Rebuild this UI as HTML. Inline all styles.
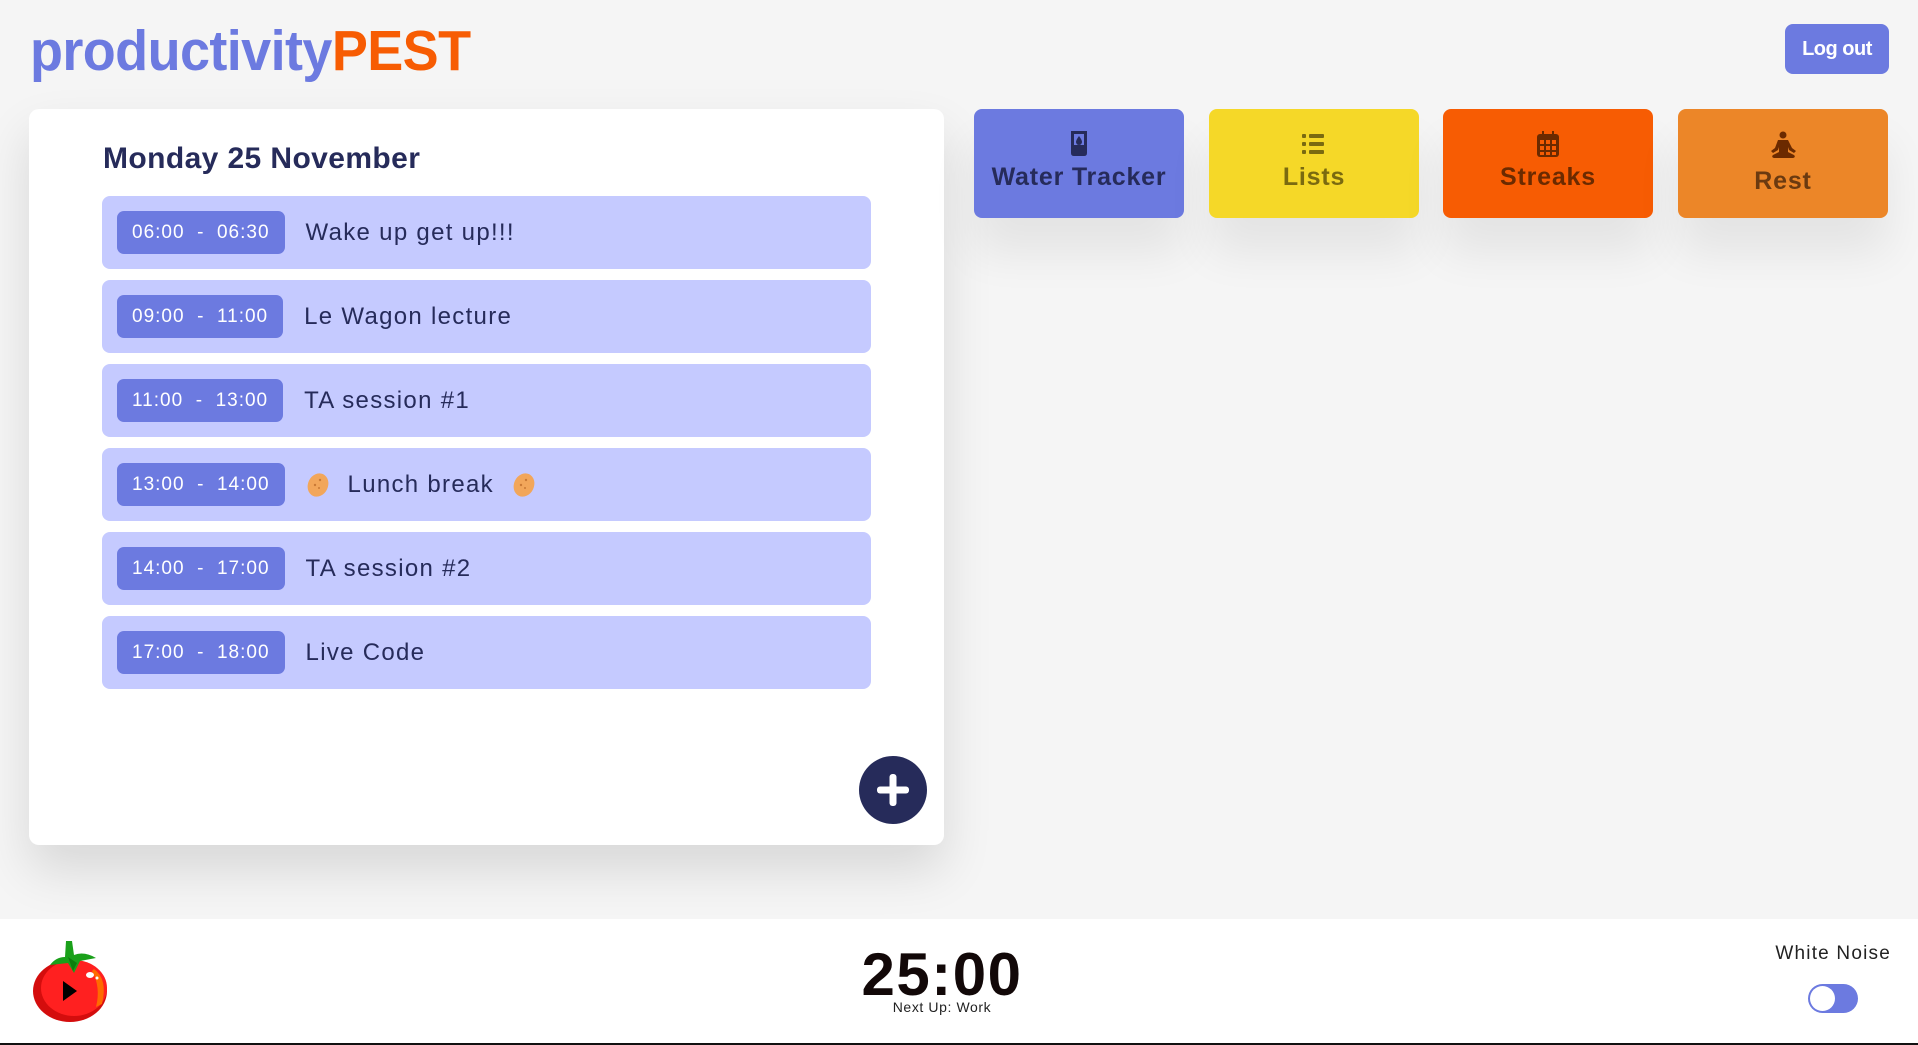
<!DOCTYPE html>
<html><head><meta charset="utf-8"><style>
*{margin:0;padding:0;box-sizing:border-box}
html,body{width:1918px;height:1045px;overflow:hidden}
body{background:#f5f5f5;font-family:"Liberation Sans",sans-serif;position:relative}
.logo{position:absolute;left:30px;top:20px;font-size:54px;font-weight:bold;letter-spacing:-0.6px;color:#6c7ae0;transform:scaleY(1.05)}
.logo span{color:#f75c03}
.logout{position:absolute;left:1785px;top:24px;width:104px;height:50px;background:#6c7ae0;border-radius:8px;color:#fff;font-weight:bold;font-size:20px;line-height:50px;text-align:center;letter-spacing:-.5px}
.card{position:absolute;left:29px;top:109px;width:915px;height:736px;background:#fff;border-radius:10px;box-shadow:0 25px 50px rgba(0,0,0,.12)}
.title{position:absolute;left:74px;top:33px;font-size:30px;font-weight:bold;color:#262b5a;letter-spacing:0.4px}
.row{position:absolute;left:73px;width:769px;height:73px;background:#c5caff;border-radius:8px;display:flex;align-items:center}
.badge{margin-left:15px;height:43px;background:#6c7ae0;border-radius:7px;color:#fff;font-size:19px;line-height:43px;padding:0 15px;white-space:pre;letter-spacing:1px}
.ev{margin-left:21px;font-size:24px;color:#262b5a;letter-spacing:1.3px;display:flex;align-items:center;gap:18px}
.plus{position:absolute;left:830px;top:647px;width:68px;height:68px;border-radius:50%;background:#262b5a}
.plus:before,.plus:after{content:"";position:absolute;background:#fff;border-radius:3px;left:50%;top:50%;transform:translate(-50%,-50%)}
.plus:before{width:32px;height:7px}.plus:after{width:7px;height:32px}
.tile{position:absolute;top:109px;width:210px;height:109px;border-radius:8px;box-shadow:0 35px 45px rgba(0,0,0,.07);text-align:center;font-weight:bold;font-size:25px;letter-spacing:0.8px}
.tile svg{display:block;margin:22px auto 6px}
.footer{position:absolute;left:0;top:919px;width:1918px;height:126px;background:#fff;border-bottom:2px solid #111}
.time{position:absolute;left:0;width:1884px;text-align:center;top:21px;font-size:60px;font-weight:bold;color:#120808;letter-spacing:1.5px}
.next{position:absolute;left:0;width:1884px;text-align:center;top:80px;font-size:14px;color:#222;letter-spacing:.6px}
.wn{position:absolute;right:27px;top:24px;font-size:19px;color:#222;letter-spacing:1.2px}
.tog{position:absolute;left:1808px;top:65px;width:50px;height:29px;border-radius:15px;background:#6c7ae0}
.tog:after{content:"";position:absolute;left:2px;top:2px;width:25px;height:25px;border-radius:50%;background:#fff}
</style></head><body>
<div class="logo">productivity<span>PEST</span></div>
<div class="logout">Log out</div>
<div class="card">
<div class="title">Monday 25 November</div>
<div class="row" style="top:87px"><div class="badge">06:00  -  06:30</div><div class="ev">Wake up get up!!!</div></div>
<div class="row" style="top:171px"><div class="badge">09:00  -  11:00</div><div class="ev">Le Wagon lecture</div></div>
<div class="row" style="top:255px"><div class="badge">11:00  -  13:00</div><div class="ev">TA session #1</div></div>
<div class="row" style="top:339px"><div class="badge">13:00  -  14:00</div><div class="ev">
<svg width="24" height="26" viewBox="0 0 24 26"><ellipse cx="12" cy="13" rx="10" ry="12" transform="rotate(25 12 13)" fill="#f2a65a"/><circle cx="14" cy="8" r="1.2" fill="#c97a36"/><circle cx="9" cy="13" r="1.2" fill="#c97a36"/><circle cx="13" cy="16" r="1" fill="#c97a36"/></svg>
Lunch break
<svg width="24" height="26" viewBox="0 0 24 26"><ellipse cx="12" cy="13" rx="10" ry="12" transform="rotate(25 12 13)" fill="#f2a65a"/><circle cx="14" cy="8" r="1.2" fill="#c97a36"/><circle cx="9" cy="13" r="1.2" fill="#c97a36"/><circle cx="13" cy="16" r="1" fill="#c97a36"/></svg></div></div>
<div class="row" style="top:423px"><div class="badge">14:00  -  17:00</div><div class="ev">TA session #2</div></div>
<div class="row" style="top:507px"><div class="badge">17:00  -  18:00</div><div class="ev">Live Code</div></div>
<div class="plus"></div>
</div>

<div class="tile" style="left:974px;background:#6c7ae0;color:#262b5a">
<svg width="18" height="26" viewBox="0 0 18 26"><path d="M1 0h16v22q0 3-3 3H4q-3 0-3-3z" fill="#262b5a"/><rect x="4" y="3" width="10" height="11" fill="#6c7ae0"/><path d="M9 5q-3 4-3 6a3 3 0 0 0 6 0q0-2-3-6z" fill="#262b5a"/></svg>Water Tracker</div>
<div class="tile" style="left:1209px;background:#f5d828;color:#7a6a10">
<svg width="24" height="26" viewBox="0 0 24 26"><g fill="#7a6a10"><rect x="0" y="3" width="4" height="4" rx="1"/><rect x="0" y="11" width="4" height="4" rx="1"/><rect x="0" y="19" width="4" height="4" rx="1"/><rect x="7" y="3" width="15" height="4" rx="1"/><rect x="7" y="11" width="15" height="4" rx="1"/><rect x="7" y="19" width="15" height="4" rx="1"/></g></svg>Lists</div>
<div class="tile" style="left:1443px;background:#f75c03;color:#6b2a00">
<svg width="22" height="26" viewBox="0 0 22 26"><rect x="5" y="0" width="2" height="5" fill="#6b2a00"/><rect x="15" y="0" width="2" height="5" fill="#6b2a00"/><rect x="0" y="3" width="22" height="23" rx="3" fill="#6b2a00"/><g fill="#f75c03"><rect x="3" y="9" width="4" height="4"/><rect x="9" y="9" width="4" height="4"/><rect x="15" y="9" width="4" height="4"/><rect x="3" y="15" width="4" height="4"/><rect x="9" y="15" width="4" height="4"/><rect x="15" y="15" width="4" height="4"/><rect x="3" y="21" width="4" height="3"/><rect x="9" y="21" width="4" height="3"/><rect x="15" y="21" width="4" height="3"/></g></svg>Streaks</div>
<div class="tile" style="left:1678px;background:#ec8628;color:#6b3a10">
<svg width="30" height="30" viewBox="0 0 30 30"><g fill="#6b2a00"><circle cx="15" cy="4" r="3.5"/><path d="M10 9h10l4 8 4 3-2 2-5-3-1-3v5l6 3q2 2-1 3H6q-3-1-1-3l6-3v-5l-1 3-5 3-2-2 4-3z"/></g></svg>Rest</div>

<div class="footer">
<svg style="position:absolute;left:32px;top:22px" width="76" height="82" viewBox="0 0 76 82"><ellipse cx="38" cy="50" rx="37" ry="31" fill="#d40d0d"/><ellipse cx="42" cy="47" rx="33" ry="28" fill="#ff2020"/><path d="M62 28q14 10 8 35l-6 3q5-20-4-36z" fill="#ff6a00"/><ellipse cx="58" cy="34" rx="4" ry="3" fill="#fff"/><circle cx="65" cy="37" r="1.5" fill="#fff"/><path d="M34 0h6l2 14q10-4 22 3l-16 3-6 12-6-10-18 2q6-8 15-8z" fill="#1aa01a"/><path d="M36 16l5 14 4-8z" fill="#0d7d0d"/><path d="M31 40l14 10-14 10z" fill="#000"/></svg>
<div class="time">25:00</div>
<div class="next">Next Up: Work</div>
<div class="wn">White Noise</div>
<div class="tog"></div>
</div>
</body></html>
